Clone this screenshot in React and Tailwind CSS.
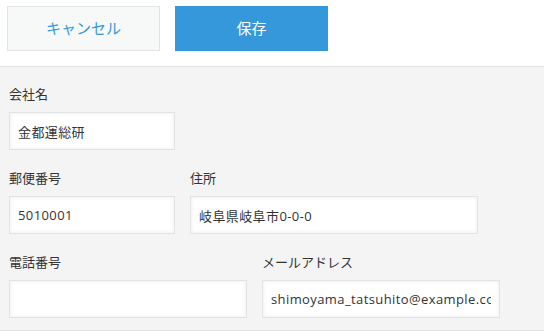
const font = { fontFamily: '"Open Sans", "Noto Sans CJK JP", sans-serif' };

function Field({ label, value, width }) {
  return (
    <div className={width}>
      <div className="h-5 leading-5 text-[13px] text-[#333] mb-2">{label}</div>
      <input
        readOnly
        value={value}
        className="block w-full h-[38px] pl-2 pr-2 bg-white border border-[#e3e3e3] shadow-[inset_0_0_4px_rgba(0,0,0,0.08)] text-[13px] tracking-[0.4px] text-[#333] outline-none"
      />
    </div>
  );
}

export default function App() {
  return (
    <div style={font} className="w-[544px] h-[331px] bg-[#f4f4f4] overflow-hidden">
      <div className="h-[67px] bg-white border-b border-[#e3e3e3] flex items-start gap-[15px] pl-[7px] pt-[6px]">
        <button className="w-[153px] h-[45px] bg-[#f7f9f9] border border-[#e0e4e5] text-[#3498db] text-[15px]">
          キャンセル
        </button>
        <button className="w-[153px] h-[45px] bg-[#3498db] border border-[#3498db] text-white text-[15px]">
          保存
        </button>
      </div>
      <div className="pl-[9px] pt-[17px] pb-[12px] border-b border-[#e3e3e3] flex flex-col gap-[18px]">
        <Field label="会社名" value="金都運総研" width="w-[166px]" />
        <div className="flex gap-[15px]">
          <Field label="郵便番号" value="5010001" width="w-[166px]" />
          <Field label="住所" value="岐阜県岐阜市0-0-0" width="w-[288px]" />
        </div>
        <div className="flex gap-[15px]">
          <Field label="電話番号" value="" width="w-[238px]" />
          <Field label="メールアドレス" value="shimoyama_tatsuhito@example.com" width="w-[238px]" />
        </div>
      </div>
    </div>
  );
}
